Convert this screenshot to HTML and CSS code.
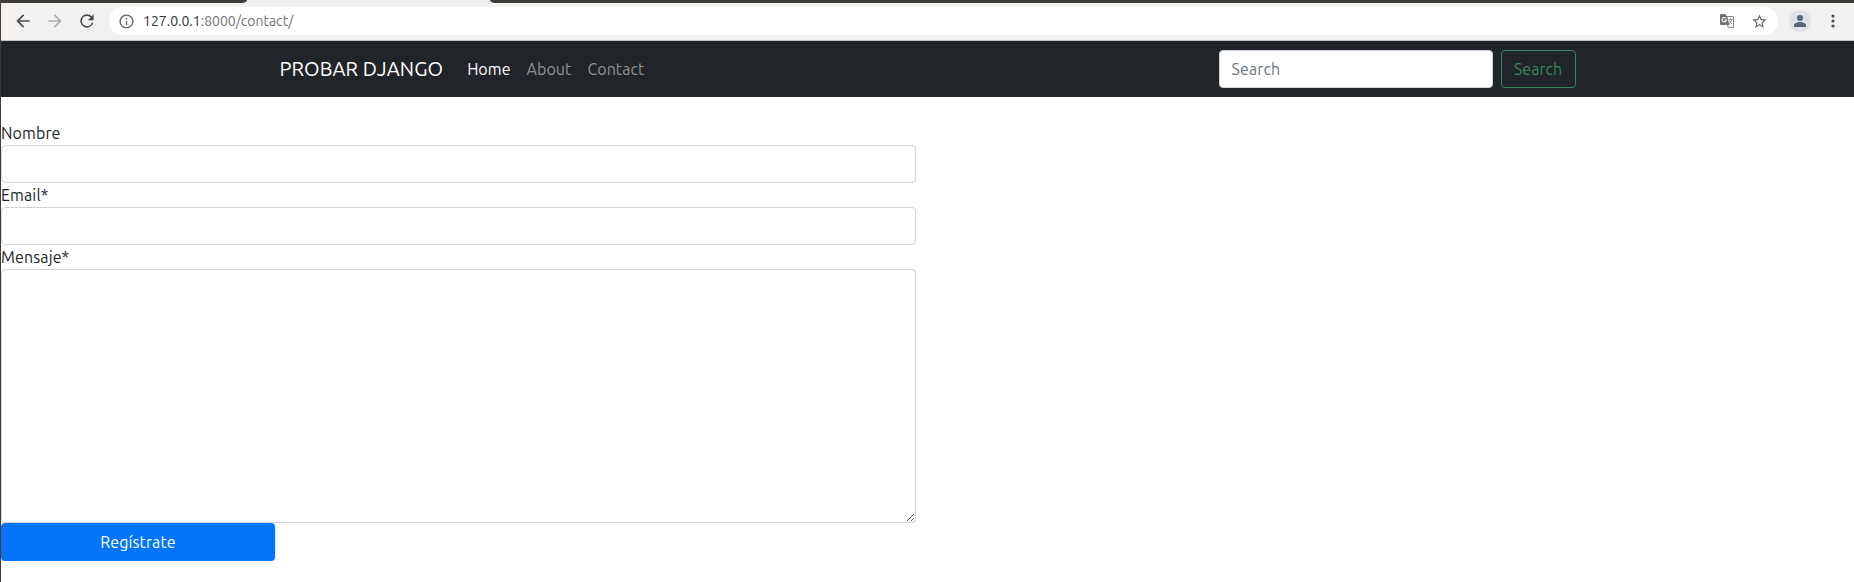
FILE: index.html
```html
<!DOCTYPE html>
<html lang="es">
<head>
<meta charset="utf-8">
<title>Contact</title>
<link rel="stylesheet" href="styles.css">
</head>
<body>
<div class="window">
  <div class="tabstrip"><div class="strip-left"></div><div class="strip-right"></div></div>
  <div class="toolbar">
    <svg class="icon back" viewBox="0 0 24 24"><path d="M20 11H7.83l5.59-5.59L12 4l-8 8 8 8 1.41-1.41L7.83 13H20z"/></svg>
    <svg class="icon forward" viewBox="0 0 24 24"><path d="M4 11h12.17l-5.59-5.59L12 4l8 8-8 8-1.41-1.41L16.17 13H4z"/></svg>
    <svg class="icon reload" viewBox="0 0 24 24"><path d="M17.65 6.35A8 8 0 1 0 19.73 14h-2.08A6 6 0 1 1 12 6c1.66 0 3.14.69 4.22 1.78L13 11h7V4z"/></svg>
    <div class="omnibox">
      <svg class="info" viewBox="0 0 24 24"><path d="M11 7h2v2h-2zm0 4h2v6h-2zm1-9a10 10 0 1 0 0 20 10 10 0 0 0 0-20zm0 18a8 8 0 1 1 0-16 8 8 0 0 1 0 16z"/></svg>
      <span class="url"><span class="host">127.0.0.1</span>:8000/contact/</span>
      <svg class="translate" viewBox="0 0 14 14"><path fill="#737373" d="M1 0h4.5l.7 2H7l2.5 9H1a1 1 0 0 1-1-1V1a1 1 0 0 1 1-1z"/><path fill="none" stroke="#fff" stroke-width="1.1" d="M5.8 4.2A2.2 2.2 0 1 0 6.4 6H4.4"/><path fill="none" stroke="#858585" d="M7 2.5h6.5v11H8.3L7.5 11"/><path fill="none" stroke="#858585" stroke-width=".8" d="M8.5 5.5H12.5M10.5 4.5v1M11.8 5.5c-.5 2-1.5 3.2-2.5 4M9.4 6.5c.7 1.5 1.6 2.6 2.6 3.5"/></svg>
      <svg class="star" viewBox="0 0 24 24"><path d="m22 9.24-7.19-.62L12 2 9.19 8.63 2 9.24l5.46 4.73L5.82 21 12 17.27 18.18 21l-1.63-7.03zM12 15.4l-3.76 2.27 1-4.28-3.32-2.88 4.38-.38L12 6.1l1.71 4.04 4.38.38-3.32 2.88 1 4.28z"/></svg>
    </div>
    <svg class="avatar" viewBox="0 0 22 22"><circle cx="11" cy="11" r="11" fill="#dee1e6"/><circle cx="11" cy="8" r="3" fill="#5a6478"/><path fill="#5a6478" d="M5 17v-2c0-2 4-3 6-3s6 1 6 3v2z"/></svg>
    <svg class="more" viewBox="0 0 4 14"><circle cx="2" cy="2" r="1.6"/><circle cx="2" cy="7" r="1.6"/><circle cx="2" cy="12" r="1.6"/></svg>
  </div>
  <nav class="navbar">
    <div class="container">
      <a class="brand">PROBAR DJANGO</a>
      <a class="link active">Home</a>
      <a class="link">About</a>
      <a class="link">Contact</a>
      <form class="search">
        <input class="control" type="search" placeholder="Search">
        <button class="search-button" type="button">Search</button>
      </form>
    </div>
  </nav>
  <form class="contact-form">
    <label class="label" for="nombre">Nombre</label>
    <input class="control" id="nombre" type="text">
    <label class="label" for="email">Email*</label>
    <input class="control" id="email" type="email">
    <label class="label" for="mensaje">Mensaje*</label>
    <textarea class="control message" id="mensaje"></textarea>
    <button class="submit" type="button">Regístrate</button>
  </form>
</div>
</body>
</html>
```
FILE: styles.css
```css
* { box-sizing: border-box; }
body {
  margin: 0;
  background: #fff;
  color: #212529;
  font: 16px/24px Ubuntu, "Noto Sans", sans-serif;
  overflow: hidden;
}
.window { height: 582px; border-left: 1px solid #463a3a; }
.tabstrip { height: 3px; display: flex; justify-content: space-between; background: #f2f1ef; }
.strip-left { width: 246px; background: #3c3b37; border-bottom-right-radius: 5px 3px; }
.strip-right { width: 1364px; background: #3c3b37; border-bottom-left-radius: 5px 3px; }
.toolbar {
  height: 38px;
  padding: 0 19px 1px 12px;
  display: flex;
  align-items: center;
  background: #f2f1ef;
  border-bottom: 1px solid #c4c6c5;
}
.toolbar svg { display: block; flex: none; }
.icon { width: 20px; height: 20px; margin-right: 12px; fill: #4a4d50; }
.forward { fill: #acacab; }
.omnibox {
  flex: 1;
  height: 28px;
  padding: 0 10px;
  display: flex;
  align-items: center;
  border-radius: 14px;
  background: #fff;
}
.info { width: 17px; height: 17px; margin-left: -1px; fill: #66696c; }
.url { margin: 0 auto 0 8px; font-size: 14px; color: #717477; }
.host { color: #303235; }
.translate { width: 14px; height: 14px; margin-right: 17px; }
.star { width: 17px; height: 17px; fill: #66696c; }
.avatar { width: 22px; height: 22px; margin: 0 20px 0 11px; }
.more { width: 4px; height: 14px; fill: #4a4d50; }
.navbar { height: 56px; background: #212529; }
.container { width: 1320px; height: 56px; margin: 0 auto; padding: 0 12px; display: flex; align-items: center; }
.brand { margin-right: 16px; font-size: 20px; line-height: 30px; letter-spacing: .1px; color: #fff; white-space: nowrap; }
.link { padding: 0 8px; letter-spacing: .06px; color: #909294; white-space: nowrap; }
.active { color: #fff; }
.search { display: flex; gap: 8px; margin-left: auto; }
.control {
  display: block;
  width: 100%;
  height: 38px;
  padding: 6px 12px;
  border: 1px solid #ced4da;
  border-radius: 4px;
  background: #fff;
  font: inherit;
}
.control::placeholder { color: #6c757d; opacity: 1; }
.search .control { width: 274px; letter-spacing: .1px; }
.search-button {
  width: 75px;
  height: 38px;
  padding: 0;
  border: 1px solid #38875a;
  border-radius: 4px;
  background: transparent;
  color: #38875a;
  font: inherit;
}
.contact-form { width: 915px; padding-top: 24px; }
.label { display: block; letter-spacing: .12px; }
.message { height: 254px; resize: vertical; }
.submit {
  display: block;
  width: 274px;
  height: 38px;
  border: 0;
  border-radius: 4px;
  background: #0275fa;
  color: #fff;
  font: inherit;
  letter-spacing: .1px;
}
```
